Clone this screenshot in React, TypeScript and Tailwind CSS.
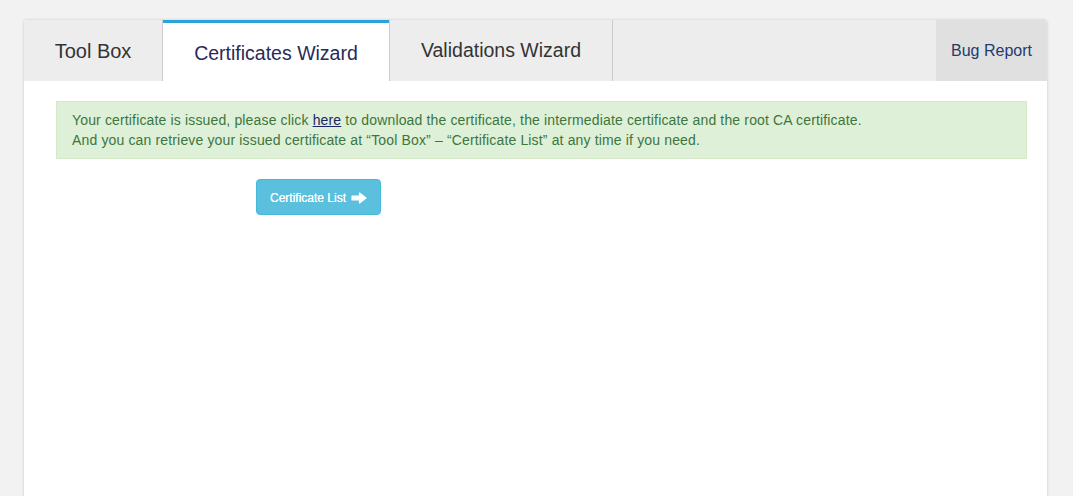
import React from "react";

export default function App() {
  return (
    <div className="h-[496px] w-full bg-[#f2f2f2] pt-[20px] pl-[24px] overflow-hidden" style={{ fontFamily: '"Liberation Sans", Arial, sans-serif' }}>
      <div className="w-[1023px] h-[520px] bg-white rounded-t-[3px] shadow-[0_0_3px_rgba(0,0,0,0.18)] flex flex-col">
        <div className="flex h-[61px] bg-[#ededed] rounded-t-[3px]">
          <div className="w-[139px] border-r border-[#cccccc] flex items-center justify-center text-[20px] text-[#333333] pt-[1px]">
            Tool Box
          </div>
          <div className="w-[226px] bg-white border-t-[3px] border-[#29a3d9] flex items-center justify-center text-[19.5px] text-[#272b5a] pt-[3px]">
            Certificates Wizard
          </div>
          <div className="w-[224px] border-l border-r border-[#cccccc] flex items-center justify-center text-[19.5px] text-[#333333] pt-[1px]">
            Validations Wizard
          </div>
          <div className="flex-1" />
          <div className="w-[111px] bg-[#e0e0e0] flex items-center justify-center text-[16px] text-[#24396e] rounded-tr-[3px] pt-[1px]">
            Bug Report
          </div>
        </div>
        <div className="pl-[32px] pt-[20px]">
          <div className="w-[971px] bg-[#dff0d8] border border-[#d6e9c6] text-[#3c763d] text-[14px] leading-[20px] tracking-[0.15px] px-[15px] pt-[8px] pb-[8px]">
            <div>
              Your certificate is issued, please click{" "}
              <a className="text-[#1d2566] underline" href="#">here</a> to download the certificate, the intermediate certificate and the root CA certificate.
            </div>
            <div>And you can retrieve your issued certificate at “Tool Box” – “Certificate List” at any time if you need.</div>
          </div>
          <div className="mt-[20px] ml-[200px]">
            <button className="w-[125px] h-[36px] bg-[#5bc0de] border border-[#46b8da] rounded-[4px] text-white text-[12px] flex items-center justify-center gap-[4px] pt-[1px]">
              <span className="[text-shadow:0_0_0.4px_white]">Certificate List</span>
              <svg width="16" height="12" viewBox="0 0 16 12" className="ml-[1px]">
                <path d="M1 4.2 H8.5 V1 L15 6 L8.5 11 V7.8 H1 Z" fill="white" strokeLinejoin="round" stroke="white" strokeWidth="1.2" />
              </svg>
            </button>
          </div>
        </div>
      </div>
    </div>
  );
}
